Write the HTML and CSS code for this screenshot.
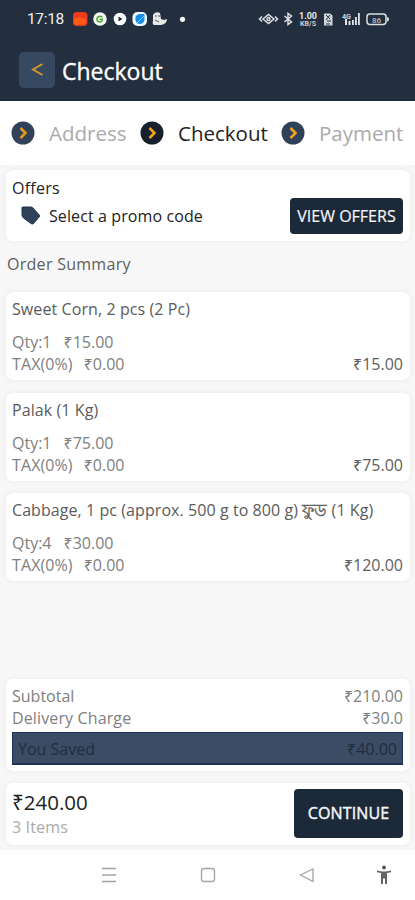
FILE: index.html
```html
<!DOCTYPE html>
<html lang="en">
<head>
<meta charset="utf-8">
<title>Checkout</title>
<link rel="stylesheet" href="styles.css">
</head>
<body>
<header class="header">
  <div class="status">
    <span class="clock">17:18</span>
    <svg class="status-icons" width="342" height="20" viewBox="73 9 342 20">
      <rect x="73" y="12" width="14.500" height="14" rx="4" fill="#ee3b1d"/>
      <path d="M74 19l5-2 7 2v3q-1 3-4 3h-5q-3 0-3-3z" fill="#ff5a16"/>
      <circle cx="100" cy="19" r="6.800" fill="#f5f7f2"/>
      <path d="M102.500 16.500h-3.500a2.800 2.800 0 1 0 3.200 4v-1.300h-2.500" fill="none" stroke="#50a52c" stroke-width="1.600"/>
      <circle cx="120" cy="19" r="6.300" fill="#fff"/>
      <path d="M118.500 16.500l4 2.500-4 2.500z" fill="#222f3d"/>
      <rect x="132.500" y="12" width="14.500" height="14" rx="5" fill="#eefaff"/>
      <path d="M135.500 20q-1-5 4-6h5v6q-1 4-5 4-3 0-4-4z" fill="#168be9"/>
      <path d="M137 23l7-7" stroke="#73ccff"/>
      <path d="M153 15q2-4 7-2l1 6 3 1 3-1q0 5-6 6h-7q-2-1-1-4z" fill="#e7e9e8"/>
      <path d="M156 15v2m3-2v2m-4 3l4 2" stroke="#51606d"/>
      <circle cx="182.500" cy="19.300" r="2.600" fill="#f2f4f5"/>
      <g fill="none" stroke="#dce0e3" stroke-width="1.500">
        <path d="M262 16.500l-2.500 2.500 2.500 2.500M275 16.500l2.500 2.500-2.500 2.500M263 19l5.500-4.500L274 19l-5.500 4.500z"/>
        <circle cx="268.500" cy="19" r="1.500"/>
        <path d="M284.500 16l7 6-3.500 2.500v-11l3.500 2.500-7 6"/>
        <path d="M367 16.500q0-2.500 3-2.500h13q3 0 3 2.500v5q0 3-3 3h-13q-3 0-3-3z"/>
      </g>
      <text x="299" y="19" class="tiny" textLength="18" lengthAdjust="spacingAndGlyphs">1.00</text>
      <text x="300" y="25.500" class="micro" textLength="16" lengthAdjust="spacingAndGlyphs">KB/S</text>
      <path d="M324 13.500h6l2.500 2v10H324z" fill="#cfd5d8"/>
      <path d="M326 15l4 4m0-4l-4 5m1 1h4m-5 3h4" stroke="#263341"/>
      <text x="342" y="19" class="micro" textLength="9" lengthAdjust="spacingAndGlyphs">4G</text>
      <path d="M345 19h2v6h-2zm3.500 2h2v4h-2zm3.500-1h1.800v5h-1.800zm3-3h1.800v8h-1.800zm3-4h1.800v12h-1.800z" fill="#e2e5e7"/>
      <path d="M387 17q2 0 2 2.200t-2 2.300z" fill="#dce0e3"/>
      <text x="372" y="22.500" class="battery" textLength="9">86</text>
    </svg>
  </div>
  <div class="titlebar">
    <button class="back" aria-label="Back"><svg width="36" height="36"><path d="M23.500 12l-9.500 5.500 9.500 5.500" fill="none" stroke="#d79a25" stroke-width="1.900"/></svg></button>
    <h1>Checkout</h1>
  </div>
</header>
<nav class="steps">
  <div class="step s1"><svg width="24" height="24"><circle cx="12" cy="12" r="11.500" fill="#304159"/><path d="M9.500 7l5 5-5 5" fill="none" stroke="#e39b18" stroke-width="2.500"/></svg><span>Address</span></div>
  <div class="step s2"><svg width="24" height="24"><circle cx="12" cy="12" r="11.500" fill="#17202d"/><path d="M9.500 7l5 5-5 5" fill="none" stroke="#f4a51e" stroke-width="2.500"/></svg><span>Checkout</span></div>
  <div class="step s3"><svg width="24" height="24"><circle cx="12" cy="12" r="11.500" fill="#304159"/><path d="M9.500 7l5 5-5 5" fill="none" stroke="#f4a51e" stroke-width="2.500"/></svg><span>Payment</span></div>
</nav>
<main>
  <section class="card offers">
    <div><h2>Offers</h2><p class="promo"><svg width="20" height="20"><path d="M1.500 1h8.500q1 0 1.700.7l6.300 7q1.200 1.300 0 2.500l-5.500 6.300q-1.200 1.200-2.500 0L2.500 12Q1 10.500 1 9V1.500z" fill="#304159" stroke="#22334a"/></svg><span>Select a promo code</span></p></div>
    <button class="view">VIEW OFFERS</button>
  </section>
  <h2 class="summary-title">Order Summary</h2>
  <section class="items">
    <article class="card item"><h3 class="n1">Sweet Corn, 2 pcs (2 Pc)</h3><p class="qty"><span>Qty:1</span><span>₹15.00</span></p><div class="tax"><p><span>TAX(0%)</span><span>₹0.00</span></p><b>₹15.00</b></div></article>
    <article class="card item"><h3 class="n2">Palak (1 Kg)</h3><p class="qty"><span>Qty:1</span><span>₹75.00</span></p><div class="tax"><p><span>TAX(0%)</span><span>₹0.00</span></p><b>₹75.00</b></div></article>
    <article class="card item"><h3 class="n3">Cabbage, 1 pc (approx. 500 g to 800 g) <span class="bn" lang="bn">ফুড</span> (1 Kg)</h3><p class="qty"><span>Qty:4</span><span>₹30.00</span></p><div class="tax"><p><span>TAX(0%)</span><span>₹0.00</span></p><b>₹120.00</b></div></article>
  </section>
  <section class="card totals">
    <div class="row"><span>Subtotal</span><span>₹210.00</span></div>
    <div class="row"><span class="delivery">Delivery Charge</span><span>₹30.0</span></div>
    <div class="row saved"><span>You Saved</span><span>₹40.00</span></div>
  </section>
  <section class="card pay">
    <div><strong>₹240.00</strong><p>3 Items</p></div>
    <button class="continue">CONTINUE</button>
  </section>
</main>
<footer class="navbar">
  <svg width="415" height="50" fill="none" stroke="#a4a4a4" stroke-width="1.300">
    <path d="M102 18.500h14M102 25h14M102 31.500h14"/>
    <rect x="201.500" y="18.500" width="13" height="13" rx="2.500"/>
    <path d="M313 19v12.500L300.500 25z"/>
    <circle cx="384" cy="17.500" r="1.900" fill="#555" stroke="none"/>
    <path d="M377 20.500q7 2 14 0v1.800l-4 .8V34h-2v-5.500h-2V34h-2V23.100l-4-.8z" fill="#666" stroke="none"/>
  </svg>
</footer>
</body>
</html>
```
FILE: styles.css
```css
* { box-sizing: border-box; }
body { margin: 0; width: 415px; height: 900px; overflow: hidden; background: #f7f7f7; font: 16px/22px "Open Sans", "Noto Sans", sans-serif; color: #808080; display: flex; flex-direction: column; }
h1, h2, h3, p { margin: 0; font-weight: 400; }
h2, h3 { font-size: 16px; }
button { border: 0; padding: 0; font: inherit; color: #f4f4f4; white-space: nowrap; }
svg { display: block; flex: none; }

.header { height: 101px; background: #232f3e; border-bottom: 2px solid #1d2940; flex: none; }
.status { height: 38px; padding: 9px 0 0 27px; display: flex; }
.clock { width: 46px; font: 400 15.500px/20px Roboto, sans-serif; letter-spacing: -.35px; color: #f0f2f3; }
.tiny { font: 700 9px Roboto, sans-serif; fill: #e4e7e9; }
.micro { font: 700 7px Roboto, sans-serif; fill: #cbd1d5; }
.battery { font: 700 8px Roboto, sans-serif; fill: #a7b0b6; }
.titlebar { height: 64px; padding-left: 19px; display: flex; align-items: center; gap: 7px; }
.back { width: 36px; height: 36px; border-radius: 5px; background: #374961; }
h1 { font-size: 23px; line-height: 32px; font-weight: 500; color: #fff; padding-top: 1px; -webkit-text-stroke: .35px #fff; }

.steps { height: 64px; background: #fff; display: flex; align-items: center; padding: 0 0 0 11px; flex: none; }
.step { display: flex; align-items: center; gap: 14px; width: 129px; flex: none; font-size: 20.500px; line-height: 28px; color: #aaa; }
.s2 { width: 141px; color: #222; }

main { height: 685px; padding: 5px 5px 0 6px; flex: none; }
.card { background: #fff; border-radius: 7px; box-shadow: 0 0 4px 1px #ededed; }
.offers { height: 71px; padding: 7px 7px 0 6px; display: flex; justify-content: space-between; }
.offers h2 { color: #222; letter-spacing: .25px; }
.promo { display: flex; gap: 8px; padding: 6px 0 0 9px; color: #222; letter-spacing: .1px; }
.promo svg { margin-top: 1px; }
.view { width: 113px; height: 36px; margin-top: 21px; border-radius: 4px; background: #1c2939; -webkit-text-stroke: .2px #f4f4f4; }
.summary-title { padding: 12px 0 0 1px; color: #606060; letter-spacing: .28px; }
.items { display: flex; flex-direction: column; gap: 12.500px; padding-top: 17px; height: 404px; }
.item { height: 88px; padding: 6px 7px 0 6px; flex: none; }
.item h3 { color: #5b5b5b; white-space: nowrap; letter-spacing: .09px; }
.item .n3 { letter-spacing: .07px; }
.bn { font-size: 17px; line-height: 20px; -webkit-text-stroke: .35px #5b5b5b; }
.qty { display: flex; gap: 12px; padding-top: 11px; height: 33px; }
.tax { display: flex; justify-content: space-between; }
.tax p { display: flex; gap: 11px; }
.tax p span:first-child { letter-spacing: .1px; }
.tax b { font-weight: 400; color: #606060; }
.totals { height: 92px; padding: 6px 7px 0 6px; }
.row { display: flex; justify-content: space-between; }
.delivery { letter-spacing: .13px; }
.saved { height: 33px; margin-top: 3px; padding: 5px; background: #3b4d65; border: 1px solid #1d315b; border-width: 1px 1px 2px; color: #202d41; line-height: 22px; }
.pay { height: 62px; margin-top: 12px; padding: 6px 7px 0 6px; display: flex; justify-content: space-between; }
.pay strong { display: block; font-size: 20.500px; line-height: 27px; font-weight: 400; color: #222; }
.pay p { color: #aaa; letter-spacing: .15px; }
.continue { width: 109px; height: 49px; border-radius: 4px; background: #1b2939; -webkit-text-stroke: .45px #f4f4f4; line-height: 20px; padding-bottom: 2px; letter-spacing: .15px; }
.navbar { height: 50px; background: #fefefe; }
```
